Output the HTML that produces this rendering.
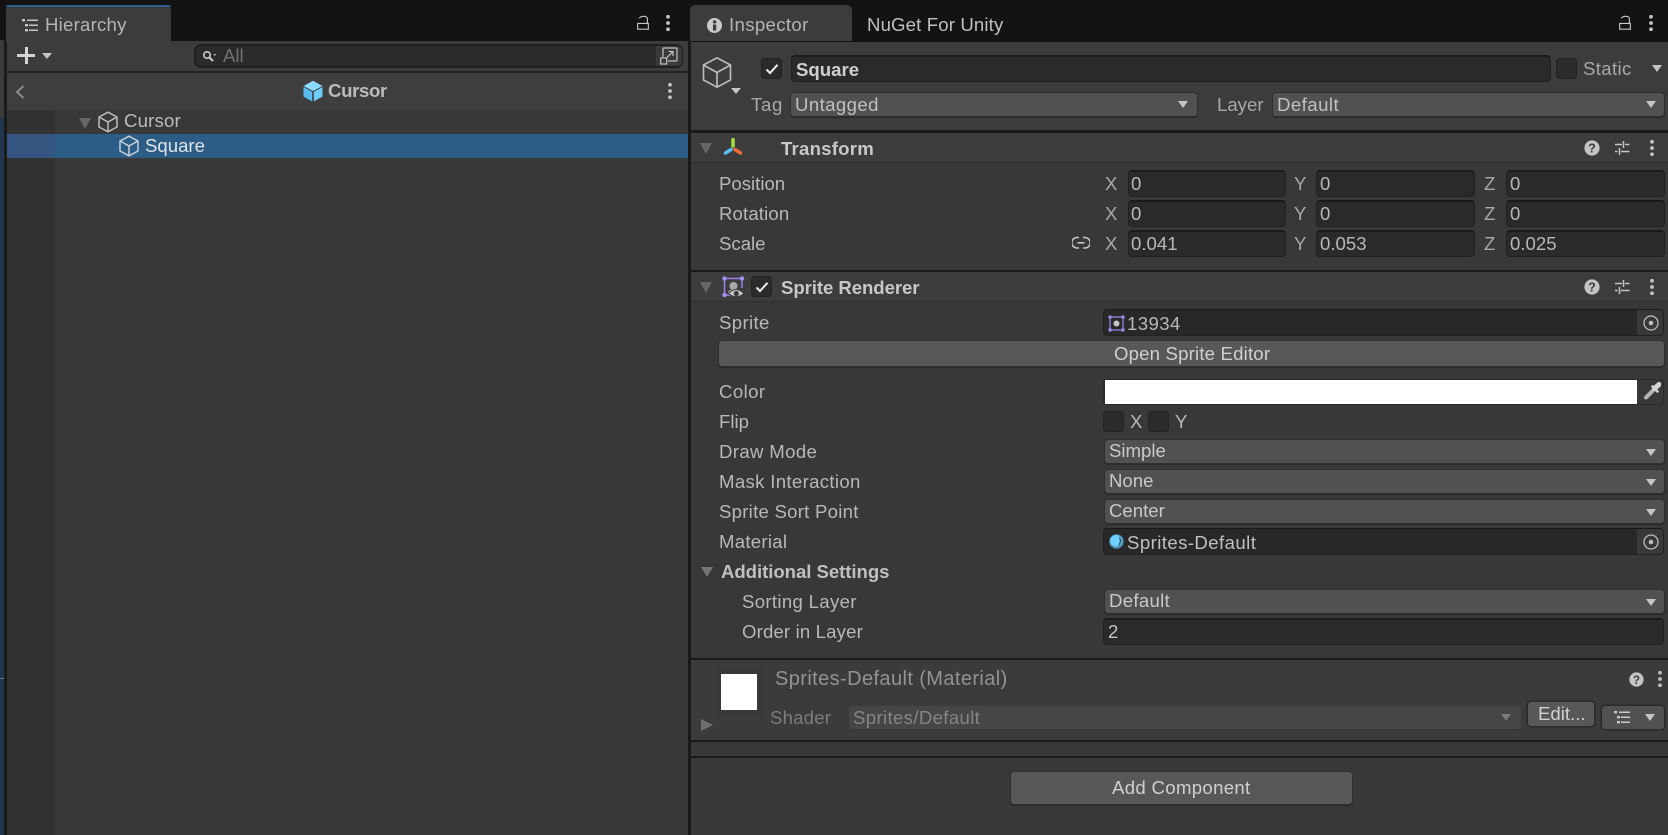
<!DOCTYPE html>
<html><head><meta charset="utf-8"><style>
html,body{margin:0;padding:0;background:#131313}
#r{position:relative;width:1668px;height:835px;overflow:hidden;background:#131313;font-family:"Liberation Sans",sans-serif;font-size:18.6px;color:#b8b8b8}
#r div,#r svg,#r span{position:absolute}
.t{white-space:nowrap;line-height:24px;height:24px}
.b{font-weight:bold}
.fld{background:#2a2a2a;border:1px solid #212121;border-top:2px solid #1a1a1a;border-radius:4px;box-sizing:border-box}
.dd{background:#515151;border-radius:3px;box-shadow:0 0 0 1px #2f2f2f,0 1px 0 1px #2a2a2a}
.tri{width:0;height:0;border-left:6px solid transparent;border-right:6px solid transparent;border-top:8px solid #c4c4c4}
.ck{background:#2b2b2b;border:1px solid #222;border-radius:4px;box-sizing:border-box}
.hl{background:#1a1a1a;left:691px;width:977px;height:3px}
</style></head><body><div id="r">
<svg width="0" height="0" style="position:absolute"><defs>
<symbol id="cube" viewBox="0 0 20 22"><path d="M10 1.2 L19 6 V16 L10 20.8 L1 16 V6 Z M1 6 L10 11 L19 6 M10 11 V20.8" fill="none" stroke="currentColor" stroke-width="1.5" stroke-linejoin="round"/></symbol>
<symbol id="dots" viewBox="0 0 6 18"><rect x="1" y="0" width="4" height="4" rx="1.5" fill="currentColor"/><rect x="1" y="7" width="4" height="4" rx="1.5" fill="currentColor"/><rect x="1" y="14" width="4" height="4" rx="1.5" fill="currentColor"/></symbol>
<symbol id="lock" viewBox="0 0 13 16"><path d="M.7 9 H12.300 V15.300 H.7 Z M2.500 3.600 C4 .5 11 .3 11.300 4 V9" fill="none" stroke="currentColor" stroke-width="1.200"/></symbol>
<symbol id="help" viewBox="0 0 16 16"><circle cx="8" cy="8" r="7.6" fill="#c4c4c4"/><text x="8" y="12.6" text-anchor="middle" font-family="Liberation Sans" font-weight="bold" font-size="12.5" fill="#3c3c3c">?</text></symbol>
<symbol id="sl" viewBox="0 0 16 16"><path d="M1 4.5 H8 M11 4.5 H15.5 M9.5 1 V8 M1 11.5 H3.5 M7 11.5 H15.5 M5.5 8 V15" fill="none" stroke="#c4c4c4" stroke-width="1.5"/></symbol>
<symbol id="chk" viewBox="0 0 14 12"><path d="M1.5 6.5 L5 10 L12.5 1.8" fill="none" stroke="#eee" stroke-width="2"/></symbol>
<symbol id="tgt" viewBox="0 0 16 16"><circle cx="8" cy="8" r="7" fill="none" stroke="#bdbdbd" stroke-width="1.300"/><circle cx="8" cy="8" r="2.300" fill="#bdbdbd"/></symbol>
<symbol id="list" viewBox="0 0 16 14"><rect x="0" y="1" width="3" height="2.4" fill="currentColor"/><rect x="5" y="1.5" width="11" height="1.5" fill="currentColor"/><rect x="3" y="6" width="3" height="2.4" fill="currentColor"/><rect x="7" y="6.5" width="9" height="1.5" fill="currentColor"/><rect x="3" y="11" width="3" height="2.4" fill="currentColor"/><rect x="7" y="11.5" width="9" height="1.5" fill="currentColor"/></symbol>
</defs></svg>

<!-- HIERARCHY -->
<div style="left:0;top:40px;width:4px;height:795px;background:#3a3a3a"></div>
<div style="left:0;top:118px;width:4px;height:717px;background:#223650"></div>
<div style="left:0;top:678px;width:4px;height:1px;background:#6a7a8a"></div>
<div style="left:4px;top:41px;width:3px;height:794px;background:#1a1a1a"></div>
<div style="left:7px;top:41px;width:681px;height:794px;background:#383838"></div>
<div style="left:6px;top:5px;width:165px;height:37px;background:#3c3c3c;border-radius:5px 5px 0 0"></div>
<div style="left:6px;top:5px;width:165px;height:2px;background:#2d5e8a;border-radius:5px 5px 0 0"></div>
<svg style="left:22px;top:18px;color:#c4c4c4" width="16" height="14"><use href="#list"/></svg>
<div class="t" style="left:45px;top:13px;color:#b4b4b4;letter-spacing:.23px">Hierarchy</div>
<svg style="left:637px;top:15px;color:#c8c8c8" width="12" height="15"><use href="#lock"/></svg>
<svg style="left:665px;top:15px;color:#c8c8c8" width="6" height="16"><use href="#dots"/></svg>

<div style="left:7px;top:41px;width:681px;height:30px;background:#3c3c3c"></div>
<div style="left:7px;top:71px;width:681px;height:2px;background:#232323"></div>
<div style="left:17px;top:54px;width:18px;height:3px;background:#d4d4d4"></div>
<div style="left:24.500px;top:47px;width:3px;height:17px;background:#d4d4d4"></div>
<div class="tri" style="left:42px;top:53px;border-top-color:#c4c4c4;border-left-width:5px;border-right-width:5px;border-top-width:6px"></div>
<div style="left:194px;top:44px;width:489px;height:24px;background:#2a2a2a;border:2px solid #1f1f1f;box-sizing:border-box;border-radius:7px"></div>
<svg style="left:201px;top:50px" width="16" height="12"><circle cx="6" cy="5" r="3.2" fill="none" stroke="#ccc" stroke-width="1.6"/><path d="M8.500 7.500 L12 11" stroke="#ccc" stroke-width="2"/><path d="M12 4 h3.500 l-1.750 2z" fill="#aaa"/></svg>
<div class="t" style="left:223px;top:44px;color:#717171">All</div>
<div style="left:656px;top:46px;width:26px;height:20px;background:#3a3a3a;border-radius:0 5px 5px 0"></div>
<svg style="left:660px;top:47px" width="18" height="18"><path d="M3 10 V1.700 Q3 1 3.700 1 H16 Q17 1 17 2 V13 Q17 14 16 14 H8" fill="none" stroke="#c4c4c4" stroke-width="1.200"/><rect x=".7" y="11" width="6" height="6" fill="#3a3a3a" stroke="#c4c4c4" stroke-width="1.200"/><path d="M6 11.500 L13 4.500 M8.500 4.500 H13 V9" fill="none" stroke="#c4c4c4" stroke-width="1.200"/></svg>

<div style="left:7px;top:73px;width:681px;height:37px;background:#3e3e3e"></div>
<svg style="left:15px;top:85px" width="10" height="14"><path d="M8.500 1 L2 7 L8.500 13" fill="none" stroke="#8c8c8c" stroke-width="2"/></svg>
<svg style="left:303px;top:80px" width="20" height="22" viewBox="0 0 20 22"><path d="M10 .8 L19.500 6 L10 11 L.5 6 Z" fill="#8bdcff"/><path d="M.5 7 L9.200 11.800 V21.500 L.5 16.500 Z" fill="#57bdf0"/><path d="M19.500 7 L10.800 11.800 V21.500 L19.500 16.500 Z" fill="#6fcdfa"/></svg>
<div class="t b" style="left:328px;top:79px;color:#bcbcbc;letter-spacing:-.35px">Cursor</div>
<svg style="left:667px;top:83px;color:#c8c8c8" width="6" height="16"><use href="#dots"/></svg>

<div style="left:7px;top:110px;width:48px;height:725px;background:#323232"></div>
<div style="left:7px;top:134px;width:681px;height:24px;background:#2c5d87"></div>
<div style="left:7px;top:134px;width:48px;height:24px;background:#335580"></div>
<div style="left:79px;top:118px;width:0;height:0;border-left:6.500px solid transparent;border-right:6.500px solid transparent;border-top:11px solid #666"></div>
<svg style="left:98px;top:111px;color:#bcbcbc" width="20" height="22"><use href="#cube"/></svg>
<div class="t" style="left:124px;top:109px;color:#bcbcbc;letter-spacing:.18px">Cursor</div>
<svg style="left:119px;top:135px;color:#c8d0d8" width="20" height="22"><use href="#cube"/></svg>
<div class="t" style="left:145px;top:134px;color:#dde3e8">Square</div>

<!-- INSPECTOR -->
<div style="left:688px;top:41px;width:3px;height:794px;background:#1a1a1a"></div>
<div style="left:691px;top:42px;width:977px;height:793px;background:#383838"></div>
<div style="left:690px;top:5px;width:162px;height:36px;background:#3c3c3c;border-radius:5px 5px 0 0"></div>
<svg style="left:707px;top:18px" width="15" height="15"><circle cx="7.500" cy="7.500" r="7.500" fill="#c8c8c8"/><rect x="6" y="6.500" width="3.200" height="6" fill="#3c3c3c"/><rect x="6" y="2.500" width="3.200" height="2.800" fill="#3c3c3c"/></svg>
<div class="t" style="left:729px;top:13px;color:#b4b4b4;letter-spacing:.35px">Inspector</div>
<div class="t" style="left:867px;top:13px;color:#c0c0c0;letter-spacing:.14px">NuGet For Unity</div>
<svg style="left:1619px;top:15px;color:#c8c8c8" width="12" height="15"><use href="#lock"/></svg>
<svg style="left:1648px;top:15px;color:#c8c8c8" width="6" height="16"><use href="#dots"/></svg>

<div style="left:691px;top:42px;width:977px;height:88px;background:#3c3c3c"></div>
<svg style="left:702px;top:56px;color:#bcbcbc" width="30" height="33" viewBox="0 0 20 22"><path d="M10 1.200 L19 6 V16 L10 20.800 L1 16 V6 Z M1 6 L10 11 L19 6 M10 11 V20.800" fill="none" stroke="currentColor" stroke-width="1.100" stroke-linejoin="round"/></svg>
<div class="tri" style="left:731px;top:88px;border-left-width:5px;border-right-width:5px;border-top-width:6px"></div>
<div class="ck" style="left:761px;top:58px;width:21px;height:21px"></div>
<svg style="left:765px;top:63px" width="14" height="12"><use href="#chk"/></svg>
<div class="fld" style="left:791px;top:55px;width:760px;height:27px"></div>
<div class="t b" style="left:796px;top:58px;color:#cfcfcf">Square</div>
<div class="ck" style="left:1556px;top:58px;width:21px;height:21px"></div>
<div class="t" style="left:1583px;top:57px;color:#a8a8a8;letter-spacing:.35px">Static</div>
<div class="tri" style="left:1652px;top:65px;border-left-width:5.500px;border-right-width:5.500px;border-top-width:7px"></div>
<div class="t" style="left:751px;top:93px;color:#a8a8a8;letter-spacing:.7px">Tag</div>
<div class="dd" style="left:791px;top:93px;width:406px;height:23px"></div>
<div class="t" style="left:795px;top:93px;color:#c0c0c0;letter-spacing:.4px">Untagged</div>
<div class="tri" style="left:1178px;top:101px;border-left-width:5.500px;border-right-width:5.500px;border-top-width:7px"></div>
<div class="t" style="left:1217px;top:93px;color:#a8a8a8">Layer</div>
<div class="dd" style="left:1273px;top:93px;width:391px;height:23px"></div>
<div class="t" style="left:1277px;top:93px;color:#c0c0c0;letter-spacing:.45px">Default</div>
<div class="tri" style="left:1646px;top:101px;border-left-width:5.500px;border-right-width:5.500px;border-top-width:7px"></div>
<div class="hl" style="top:130px"></div>

<!-- Transform -->
<div style="left:691px;top:133px;width:977px;height:29px;background:#3c3c3c"></div>
<div style="left:691px;top:162px;width:977px;height:1px;background:#303030"></div>
<div style="left:700px;top:143px;width:0;height:0;border-left:6.500px solid transparent;border-right:6.500px solid transparent;border-top:11px solid #666"></div>
<svg style="left:723px;top:138px" width="20" height="19"><path d="M10 1.500 V8" stroke="#a4e03a" stroke-width="3.500" stroke-linecap="round"/><path d="M8 11.500 L2.500 15" stroke="#55bff0" stroke-width="3.500" stroke-linecap="round"/><path d="M12 11.500 L17.500 15" stroke="#ef6a35" stroke-width="3.500" stroke-linecap="round"/></svg>
<div class="t b" style="left:781px;top:137px;color:#c8c8c8;letter-spacing:.23px">Transform</div>
<svg style="left:1584px;top:140px" width="16" height="16"><use href="#help"/></svg>
<svg style="left:1614px;top:140px" width="16" height="16"><use href="#sl"/></svg>
<svg style="left:1649px;top:140px;color:#c8c8c8" width="6" height="16"><use href="#dots"/></svg>

<div class="t" style="left:719px;top:172px">Position</div>
<div class="t" style="left:719px;top:202px;letter-spacing:.13px">Rotation</div>
<div class="t" style="left:719px;top:232px">Scale</div>
<svg style="left:1072px;top:236px" width="18" height="14" fill="none" stroke="#c4c4c4" stroke-width="1.600"><path d="M7 1.500 H5 A5.200 5.200 0 0 0 5 12 H7 M11 1.500 H13 A5.200 5.200 0 0 1 13 12 H11 M5.500 6.800 H12.500"/></svg>

<div class="t" style="left:1105px;top:172px;color:#a8a8a8">X</div><div class="fld" style="left:1128px;top:170px;width:158px;height:27px"></div><div class="t" style="left:1131px;top:172px">0</div>
<div class="t" style="left:1294px;top:172px;color:#a8a8a8">Y</div><div class="fld" style="left:1316px;top:170px;width:159px;height:27px"></div><div class="t" style="left:1320px;top:172px">0</div>
<div class="t" style="left:1484px;top:172px;color:#a8a8a8">Z</div><div class="fld" style="left:1506px;top:170px;width:159px;height:27px"></div><div class="t" style="left:1510px;top:172px">0</div>

<div class="t" style="left:1105px;top:202px;color:#a8a8a8">X</div><div class="fld" style="left:1128px;top:200px;width:158px;height:27px"></div><div class="t" style="left:1131px;top:202px">0</div>
<div class="t" style="left:1294px;top:202px;color:#a8a8a8">Y</div><div class="fld" style="left:1316px;top:200px;width:159px;height:27px"></div><div class="t" style="left:1320px;top:202px">0</div>
<div class="t" style="left:1484px;top:202px;color:#a8a8a8">Z</div><div class="fld" style="left:1506px;top:200px;width:159px;height:27px"></div><div class="t" style="left:1510px;top:202px">0</div>

<div class="t" style="left:1105px;top:232px;color:#a8a8a8">X</div><div class="fld" style="left:1128px;top:230px;width:158px;height:27px"></div><div class="t" style="left:1131px;top:232px">0.041</div>
<div class="t" style="left:1294px;top:232px;color:#a8a8a8">Y</div><div class="fld" style="left:1316px;top:230px;width:159px;height:27px"></div><div class="t" style="left:1320px;top:232px">0.053</div>
<div class="t" style="left:1484px;top:232px;color:#a8a8a8">Z</div><div class="fld" style="left:1506px;top:230px;width:159px;height:27px"></div><div class="t" style="left:1510px;top:232px">0.025</div>

<div class="hl" style="top:270px;height:2px"></div>

<!-- Sprite Renderer -->
<div style="left:691px;top:272px;width:977px;height:29px;background:#3c3c3c"></div>
<div style="left:691px;top:301px;width:977px;height:1px;background:#303030"></div>
<div style="left:700px;top:282px;width:0;height:0;border-left:6.500px solid transparent;border-right:6.500px solid transparent;border-top:11px solid #666"></div>
<svg style="left:722px;top:276px" width="23" height="23"><path d="M2.500 19 V2.500 H20 V12" fill="none" stroke="#9a80e8" stroke-width="1.500"/><path d="M2.500 19 H8" stroke="#9a80e8" stroke-width="1.500"/><g fill="#a88ef2"><circle cx="2.500" cy="2.500" r="2.200"/><circle cx="20" cy="2.500" r="2.200"/><circle cx="2.500" cy="19" r="2.200"/></g><circle cx="11.500" cy="10" r="4" fill="#a8a8a8"/><path d="M6 17 C6 12 17 12 17 17Z" fill="#a8a8a8"/><path d="M6.500 17.500 Q14 9.500 22 17.500 Q14 24 6.500 17.500Z" fill="#c8c8c8" stroke="#3c3c3c" stroke-width="1"/><circle cx="14.300" cy="17.500" r="2.600" fill="#3c3c3c"/></svg>
<div class="ck" style="left:751px;top:276px;width:21px;height:21px"></div>
<svg style="left:755px;top:281px" width="14" height="12"><use href="#chk"/></svg>
<div class="t b" style="left:781px;top:276px;color:#c8c8c8;letter-spacing:-.07px">Sprite Renderer</div>
<svg style="left:1584px;top:279px" width="16" height="16"><use href="#help"/></svg>
<svg style="left:1614px;top:279px" width="16" height="16"><use href="#sl"/></svg>
<svg style="left:1649px;top:279px;color:#c8c8c8" width="6" height="16"><use href="#dots"/></svg>

<div class="t" style="left:719px;top:311px;letter-spacing:.35px">Sprite</div>
<div class="fld" style="left:1103px;top:309px;width:561px;height:27px;border-top-width:1px;background:#282828"></div>
<div style="left:1637px;top:310px;width:26px;height:25px;background:#383838;border-radius:0 3px 3px 0"></div>
<svg style="left:1643px;top:315px" width="16" height="16"><use href="#tgt"/></svg>
<svg style="left:1108px;top:315px" width="17" height="17"><rect x="2" y="2" width="13" height="13" fill="none" stroke="#9a80e8" stroke-width="1.300"/><g fill="#a58cf0"><rect x=".5" y=".5" width="3" height="3"/><rect x="13.500" y=".5" width="3" height="3"/><rect x=".5" y="13.500" width="3" height="3"/><rect x="13.500" y="13.500" width="3" height="3"/></g><circle cx="8.500" cy="8.500" r="3" fill="#c4c4c4"/></svg>
<div class="t" style="left:1127px;top:312px;letter-spacing:.4px">13934</div>
<div style="left:719px;top:341px;width:945px;height:25px;background:#585858;border-radius:3px;box-shadow:0 0 0 1px #2f2f2f,0 1px 0 1px #2a2a2a"></div>
<div class="t" style="left:1114px;top:342px;color:#d0d0d0;letter-spacing:.18px">Open Sprite Editor</div>

<div class="t" style="left:719px;top:380px;letter-spacing:.4px">Color</div>
<div style="left:1103px;top:379px;width:561px;height:26px;background:#2a2a2a;border-radius:3px"></div>
<div style="left:1105px;top:380px;width:532px;height:24px;background:#fff"></div>
<div style="left:1637px;top:380px;width:26px;height:24px;background:#383838;border-radius:0 3px 3px 0"></div>
<svg style="left:1643px;top:382px" width="18" height="19"><path d="M3 15.500 L11 7.500" stroke="#b4b4b4" stroke-width="4" stroke-linecap="round"/><path d="M11.500 6.500 L16 2.500" stroke="#d4d4d4" stroke-width="5" stroke-linecap="round"/><path d="M9.500 4.500 L14.500 9.500" stroke="#d4d4d4" stroke-width="2.500" stroke-linecap="round"/></svg>

<div class="t" style="left:719px;top:410px">Flip</div>
<div class="ck" style="left:1103px;top:411px;width:21px;height:21px"></div>
<div class="t" style="left:1130px;top:410px">X</div>
<div class="ck" style="left:1148px;top:411px;width:21px;height:21px"></div>
<div class="t" style="left:1175px;top:410px">Y</div>

<div class="t" style="left:719px;top:440px;letter-spacing:.35px">Draw Mode</div>
<div class="dd" style="left:1105px;top:440px;width:559px;height:23px"></div>
<div class="t" style="left:1109px;top:439px;color:#c8c8c8">Simple</div>
<div class="tri" style="left:1646px;top:449px;border-left-width:5.500px;border-right-width:5.500px;border-top-width:7px"></div>

<div class="t" style="left:719px;top:470px;letter-spacing:.33px">Mask Interaction</div>
<div class="dd" style="left:1105px;top:470px;width:559px;height:23px"></div>
<div class="t" style="left:1109px;top:469px;color:#c8c8c8">None</div>
<div class="tri" style="left:1646px;top:479px;border-left-width:5.500px;border-right-width:5.500px;border-top-width:7px"></div>

<div class="t" style="left:719px;top:500px;letter-spacing:.25px">Sprite Sort Point</div>
<div class="dd" style="left:1105px;top:500px;width:559px;height:23px"></div>
<div class="t" style="left:1109px;top:499px;color:#c8c8c8">Center</div>
<div class="tri" style="left:1646px;top:509px;border-left-width:5.500px;border-right-width:5.500px;border-top-width:7px"></div>

<div class="t" style="left:719px;top:530px;letter-spacing:.27px">Material</div>
<div class="fld" style="left:1103px;top:528px;width:561px;height:27px;border-top-width:1px;background:#282828"></div>
<div style="left:1637px;top:529px;width:26px;height:25px;background:#383838;border-radius:0 3px 3px 0"></div>
<svg style="left:1643px;top:534px" width="16" height="16"><use href="#tgt"/></svg>
<svg style="left:1109px;top:534px" width="15" height="15"><circle cx="7.500" cy="7.500" r="7.300" fill="#4c8fb0"/><circle cx="7" cy="6.800" r="5.800" fill="#6fcfff"/><path d="M10 2.500 A6 6 0 0 1 9 12 Q12 8 10 2.500Z" fill="#2a2a2a"/></svg>
<div class="t" style="left:1127px;top:531px;color:#c0c0c0;letter-spacing:.42px">Sprites-Default</div>

<div style="left:701px;top:567px;width:0;height:0;border-left:6px solid transparent;border-right:6px solid transparent;border-top:10px solid #757575"></div>
<div class="t b" style="left:721px;top:560px;color:#c0c0c0;letter-spacing:-.05px">Additional Settings</div>
<div class="t" style="left:742px;top:590px;letter-spacing:.32px">Sorting Layer</div>
<div class="dd" style="left:1105px;top:590px;width:559px;height:23px"></div>
<div class="t" style="left:1109px;top:589px;color:#c8c8c8;letter-spacing:.3px">Default</div>
<div class="tri" style="left:1646px;top:599px;border-left-width:5.500px;border-right-width:5.500px;border-top-width:7px"></div>
<div class="t" style="left:742px;top:620px;letter-spacing:.15px">Order in Layer</div>
<div class="fld" style="left:1103px;top:618px;width:561px;height:27px"></div>
<div class="t" style="left:1108px;top:620px;color:#c4c4c4">2</div>

<div class="hl" style="top:658px;height:2px"></div>

<!-- Material -->
<div style="left:691px;top:660px;width:977px;height:80px;background:#3b3b3b"></div>
<div style="left:716px;top:668px;width:47px;height:48px;background:#383838"></div>
<div style="left:721px;top:674px;width:36px;height:36px;background:#fff"></div>
<div class="t" style="left:775px;top:667px;color:#939393;font-size:20px;letter-spacing:.4px">Sprites-Default (Material)</div>
<svg style="left:1629px;top:672px" width="15" height="15" viewBox="0 0 16 16"><use href="#help"/></svg>
<svg style="left:1657px;top:671px;color:#c0c0c0" width="6" height="16"><use href="#dots"/></svg>
<div style="left:701px;top:719px;width:0;height:0;border-top:6.500px solid transparent;border-bottom:6.500px solid transparent;border-left:12px solid #6e6e6e"></div>
<div class="t" style="left:770px;top:706px;color:#7c7c7c;letter-spacing:.2px">Shader</div>
<div style="left:849px;top:706px;width:672px;height:23px;background:#464646;border-radius:3px;box-shadow:0 1px 0 #353535"></div>
<div class="t" style="left:853px;top:706px;color:#858585;letter-spacing:.35px">Sprites/Default</div>
<div class="tri" style="left:1501px;top:714px;border-left-width:5.500px;border-right-width:5.500px;border-top-width:7px;border-top-color:#7a7a7a"></div>
<div style="left:1528px;top:702px;width:66px;height:24px;background:#585858;border-radius:3px;box-shadow:0 0 0 1.500px #2a2a2a"></div>
<div class="t" style="left:1538px;top:702px;color:#d0d0d0">Edit...</div>
<div style="left:1602px;top:706px;width:62px;height:23px;background:#515151;border-radius:3px;box-shadow:0 0 0 1.500px #2a2a2a"></div>
<svg style="left:1614px;top:710px;color:#c8c8c8" width="16" height="14"><use href="#list"/></svg>
<div class="tri" style="left:1645px;top:714px;border-left-width:5.500px;border-right-width:5.500px;border-top-width:7px"></div>

<div class="hl" style="top:740px;height:2px"></div>
<div class="hl" style="top:756px;height:2px"></div>

<div style="left:1011px;top:772px;width:341px;height:32px;background:#585858;border-radius:3px;box-shadow:0 0 0 1px #2f2f2f,0 1px 0 1px #2a2a2a"></div>
<div class="t" style="left:1112px;top:776px;color:#d0d0d0;letter-spacing:.32px">Add Component</div>
</div></body></html>
